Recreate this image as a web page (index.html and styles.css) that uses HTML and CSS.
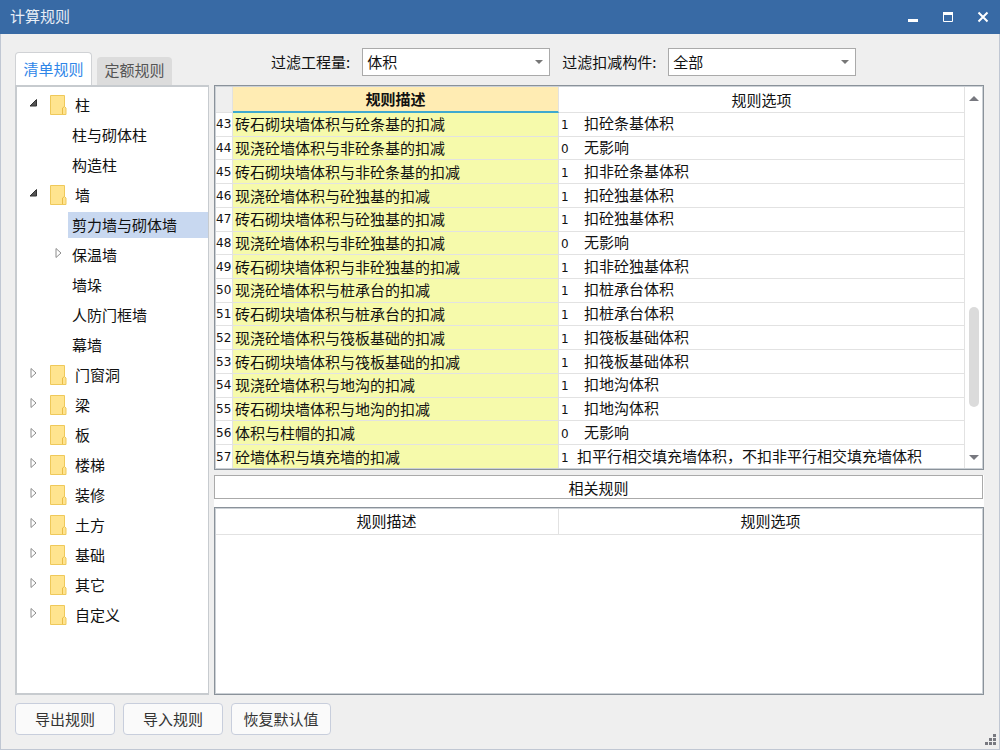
FILE: index.html
```html
<!DOCTYPE html>
<html lang="zh-CN">
<head>
<meta charset="utf-8">
<title>计算规则</title>
<link rel="stylesheet" href="styles.css">
</head>
<body>
<svg class="defs" aria-hidden="true">
  <symbol id="open" viewBox="0 0 9 9"><path d="M7.500 1v6.500H1z" fill="#555" stroke="#333"/></symbol>
  <symbol id="closed" viewBox="0 0 8 12"><path d="M1.500 1.500v9L6.500 6z" fill="#fff" stroke="#8c8c8c"/></symbol>
  <symbol id="folder" viewBox="0 0 17 20"><path d="M.5.5h14v11l1.500 1.500v6.500H.5z" fill="#ffe48f" stroke="#efc95a"/><path d="M12.500 19v-6l2-1.500" fill="none" stroke="#e8bc48"/></symbol>
</svg>
<div class="window">
  <header class="titlebar">
    <h1 class="title">计算规则</h1>
    <button class="win-btn" aria-label="最小化"><svg width="12" height="12"><path d="M1 9.500h10" stroke="#fff" stroke-width="3"/></svg></button>
    <button class="win-btn" aria-label="最大化"><svg width="12" height="12"><path d="M1.500 2v8.500h9V2" fill="none" stroke="#fff"/><path d="M1 2.500h10" stroke="#fff" stroke-width="3"/></svg></button>
    <button class="win-btn" aria-label="关闭"><svg width="12" height="12"><path d="M1.500 1.500l9 9M10.500 1.500l-9 9" stroke="#fff" stroke-width="2"/></svg></button>
  </header>
  <main class="content">
    <aside class="side">
      <div class="tabs" role="tablist">
        <button class="tab active" role="tab" aria-selected="true">清单规则</button>
        <button class="tab" role="tab" aria-selected="false">定额规则</button>
      </div>
      <ul class="tree">
        <li><button class="node"><svg class="arrow"><use href="#open"/></svg><svg class="folder"><use href="#folder"/></svg>柱</button>
          <ul class="branch">
            <li><button class="leaf"><span class="name">柱与砌体柱</span></button></li>
            <li><button class="leaf"><span class="name">构造柱</span></button></li>
          </ul>
        </li>
        <li><button class="node"><svg class="arrow"><use href="#open"/></svg><svg class="folder"><use href="#folder"/></svg>墙</button>
          <ul class="branch">
            <li><button class="leaf selected"><span class="name">剪力墙与砌体墙</span></button></li>
            <li><button class="leaf parent"><svg class="arrow"><use href="#closed"/></svg><span class="name">保温墙</span></button></li>
            <li><button class="leaf"><span class="name">墙垛</span></button></li>
            <li><button class="leaf"><span class="name">人防门框墙</span></button></li>
            <li><button class="leaf"><span class="name">幕墙</span></button></li>
          </ul>
        </li>
        <li><button class="node"><svg class="arrow"><use href="#closed"/></svg><svg class="folder"><use href="#folder"/></svg>门窗洞</button></li>
        <li><button class="node"><svg class="arrow"><use href="#closed"/></svg><svg class="folder"><use href="#folder"/></svg>梁</button></li>
        <li><button class="node"><svg class="arrow"><use href="#closed"/></svg><svg class="folder"><use href="#folder"/></svg>板</button></li>
        <li><button class="node"><svg class="arrow"><use href="#closed"/></svg><svg class="folder"><use href="#folder"/></svg>楼梯</button></li>
        <li><button class="node"><svg class="arrow"><use href="#closed"/></svg><svg class="folder"><use href="#folder"/></svg>装修</button></li>
        <li><button class="node"><svg class="arrow"><use href="#closed"/></svg><svg class="folder"><use href="#folder"/></svg>土方</button></li>
        <li><button class="node"><svg class="arrow"><use href="#closed"/></svg><svg class="folder"><use href="#folder"/></svg>基础</button></li>
        <li><button class="node"><svg class="arrow"><use href="#closed"/></svg><svg class="folder"><use href="#folder"/></svg>其它</button></li>
        <li><button class="node"><svg class="arrow"><use href="#closed"/></svg><svg class="folder"><use href="#folder"/></svg>自定义</button></li>
      </ul>
    </aside>
    <section class="detail">
      <form class="filters">
        <label for="quantity">过滤工程量:</label>
        <span class="combo"><select id="quantity"><option>体积</option></select><svg class="caret" viewBox="0 0 8 4"><path d="M0 0h8L4 4z" fill="#777"/></svg></span>
        <label for="component">过滤扣减构件:</label>
        <span class="combo"><select id="component"><option>全部</option></select><svg class="caret" viewBox="0 0 8 4"><path d="M0 0h8L4 4z" fill="#777"/></svg></span>
      </form>
      <div class="panels">
        <div class="panel rules">
          <table class="rule-table">
            <colgroup><col class="col-num"><col class="col-desc"><col></colgroup>
            <thead><tr><td class="corner"></td><th class="sorted" scope="col">规则描述</th><th scope="col">规则选项</th></tr></thead>
            <tbody>
              <tr><td>43</td><td>砖石砌块墙体积与砼条基的扣减</td><td><span class="code">1</span>扣砼条基体积</td></tr>
              <tr><td>44</td><td>现浇砼墙体积与非砼条基的扣减</td><td><span class="code">0</span>无影响</td></tr>
              <tr><td>45</td><td>砖石砌块墙体积与非砼条基的扣减</td><td><span class="code">1</span>扣非砼条基体积</td></tr>
              <tr><td>46</td><td>现浇砼墙体积与砼独基的扣减</td><td><span class="code">1</span>扣砼独基体积</td></tr>
              <tr><td>47</td><td>砖石砌块墙体积与砼独基的扣减</td><td><span class="code">1</span>扣砼独基体积</td></tr>
              <tr><td>48</td><td>现浇砼墙体积与非砼独基的扣减</td><td><span class="code">0</span>无影响</td></tr>
              <tr><td>49</td><td>砖石砌块墙体积与非砼独基的扣减</td><td><span class="code">1</span>扣非砼独基体积</td></tr>
              <tr><td>50</td><td>现浇砼墙体积与桩承台的扣减</td><td><span class="code">1</span>扣桩承台体积</td></tr>
              <tr><td>51</td><td>砖石砌块墙体积与桩承台的扣减</td><td><span class="code">1</span>扣桩承台体积</td></tr>
              <tr><td>52</td><td>现浇砼墙体积与筏板基础的扣减</td><td><span class="code">1</span>扣筏板基础体积</td></tr>
              <tr><td>53</td><td>砖石砌块墙体积与筏板基础的扣减</td><td><span class="code">1</span>扣筏板基础体积</td></tr>
              <tr><td>54</td><td>现浇砼墙体积与地沟的扣减</td><td><span class="code">1</span>扣地沟体积</td></tr>
              <tr><td>55</td><td>砖石砌块墙体积与地沟的扣减</td><td><span class="code">1</span>扣地沟体积</td></tr>
              <tr><td>56</td><td>体积与柱帽的扣减</td><td><span class="code">0</span>无影响</td></tr>
              <tr><td>57</td><td>砼墙体积与填充墙的扣减</td><td><span class="code narrow">1</span>扣平行相交填充墙体积，不扣非平行相交填充墙体积</td></tr>
            </tbody>
          </table>
          <div class="scrollbar">
            <svg width="10" height="5"><path d="M0 5h10L5 0z" fill="#77787f"/></svg>
            <div class="track"><div class="thumb"></div></div>
            <svg width="10" height="5"><path d="M0 0h10L5 5z" fill="#77787f"/></svg>
          </div>
        </div>
        <div class="lower">
          <h2 class="related-title">相关规则</h2>
          <div class="panel related">
            <table class="related-table">
              <colgroup><col class="col-related"><col></colgroup>
              <thead><tr><th scope="col">规则描述</th><th scope="col">规则选项</th></tr></thead>
            </table>
          </div>
        </div>
      </div>
    </section>
  </main>
  <footer class="actions">
    <button class="action">导出规则</button>
    <button class="action">导入规则</button>
    <button class="action">恢复默认值</button>
    <svg class="grip" width="11" height="11" fill="#77787f"><path d="M8 0h3v3H8zM4 4h3v3H4zM8 4h3v3H8zM0 8h3v3H0zM4 8h3v3H4zM8 8h3v3H8z"/></svg>
  </footer>
</div>
</body>
</html>
```
FILE: styles.css
```css
* { box-sizing: border-box; }
body {
  margin: 0;
  font: 15px/20px "Noto Sans CJK SC", sans-serif;
  color: #111;
}
button, select { font: inherit; color: inherit; }
button { padding: 0; border: 0; background: none; }
ul { list-style: none; margin: 0; padding: 0; }
svg { flex: none; display: block; }
.defs { position: absolute; width: 0; height: 0; }

.window {
  display: flex;
  flex-direction: column;
  height: 100vh;
  min-height: 740px;
  background: #efefef;
  border: 1px solid #c0c7d3;
  border-top: 0;
}
.titlebar {
  display: flex;
  align-items: center;
  height: 34px;
  margin: 0 -1px;
  padding: 0 4px 0 10px;
  background: #386aa5;
  color: #e8eef6;
}
.title { flex: 1; margin: 0; padding-bottom: 2px; font-size: 15px; font-weight: 400; }
.win-btn { display: grid; place-items: center; width: 35px; height: 34px; }
.win-btn:last-child { width: 27px; margin-left: 4px; }

.content {
  flex: 1;
  display: grid;
  grid-template-columns: 194px 1fr;
  gap: 5px;
  min-height: 0;
  padding: 14px 15px 0 14px;
}
.side, .detail { display: flex; flex-direction: column; min-height: 0; }
.tabs { display: flex; align-items: flex-end; gap: 5px; height: 37px; padding-top: 4px; }
.tab {
  width: 75px;
  height: 28px;
  padding-bottom: 2px;
  border-radius: 4px 4px 0 0;
  background: #dcdcdc;
  color: #555;
}
.tab.active {
  width: 77px;
  height: 33px;
  padding-bottom: 0;
  background: #fff;
  border: 1px solid #d0d2d5;
  border-bottom: 0;
  color: #2f86e8;
}
.tree { flex: 1; padding: 3px 0; background: #fff; border: 2px solid #c7cbcf; border-right-width: 1px; }
.node, .leaf { display: flex; align-items: center; width: 100%; height: 30px; text-align: left; }
.node { padding-left: 12px; }
.arrow { width: 9px; height: 12px; margin-bottom: 4px; }
.node .folder { width: 17px; height: 20px; margin: 0 8px 0 12px; }
.leaf { padding-left: 51px; }
.leaf.parent { padding-left: 37px; }
.leaf .arrow { margin-right: 5px; }
.name { flex: 1; padding: 3px 4px; }
.selected .name { background: #c8d8f0; }

.filters { display: flex; align-items: center; height: 28px; margin-bottom: 9px; padding-left: 57px; }
.combo { position: relative; width: 188px; margin: 0 12px; }
.combo select {
  appearance: none;
  display: block;
  width: 100%;
  height: 28px;
  padding: 0 24px 0 4px;
  background: #fff;
  border: 1px solid #aaa;
  border-radius: 0;
}
.caret { position: absolute; right: 7px; top: 12px; width: 8px; height: 4px; }

.panels { flex: 1; display: grid; grid-template-rows: 385fr 225fr; min-height: 0; }
.panel { background: #fff; border: 1px solid #8a929a; outline: 1px solid #ccd1d6; outline-offset: -2px; }
.rules { display: grid; grid-template-columns: 1fr 18px; min-height: 0; padding-top: 1px; }
table { width: 100%; table-layout: fixed; border-collapse: separate; border-spacing: 0; }
th, td { padding: 0; font-weight: 400; border-right: 1px solid #e2e2e2; border-bottom: 1px solid #e2e2e2; }
.rule-table { height: 100%; }
.rule-table thead { height: 26px; }
.rule-table td { height: 22px; white-space: nowrap; line-height: 20px; }
.col-num { width: 18px; }
.col-desc { width: 326px; }
.rule-table .corner { background: #efefef; }
.rule-table .sorted { background: #ffecb3; border-bottom: 2px solid #3fa9cf; font-weight: 700; }
tbody td:nth-child(1), .code { font-family: "DejaVu Sans", sans-serif; font-size: 12px; }
tbody td:nth-child(1) { padding-left: 1px; }
tbody td:nth-child(2) { padding-left: 2px; background: #f6faab; }
tbody td:nth-child(3) { padding-left: 2px; }
.code { display: inline-block; width: 23px; }
.code.narrow { width: 16px; }
.scrollbar { display: flex; flex-direction: column; align-items: center; padding: 9px 0; }
.track { flex: 1; width: 10px; }
.thumb { width: 10px; height: 100px; margin-top: 206px; border-radius: 5px; background: #dbdbdb; }
.lower { display: flex; flex-direction: column; margin-top: 5px; background: #fff; }
.related-title {
  margin: 0 1px 0 0;
  border: 1px solid #aaa;
  height: 24px;
  background: #fff;
  font-size: 15px;
  font-weight: 400;
  line-height: 23px;
  text-align: center;
}
.related { flex: 1; margin-top: 8px; }
.related-table th { height: 27px; }
.col-related { width: 344px; }

.actions { position: relative; display: flex; gap: 8px; padding: 8px 14px 14px; }
.action {
  width: 100px;
  height: 32px;
  background: #fafafa;
  border: 1px solid #c8cedc;
  border-radius: 4px;
  color: #333;
}
.grip { position: absolute; right: 3px; bottom: 4px; }
```
